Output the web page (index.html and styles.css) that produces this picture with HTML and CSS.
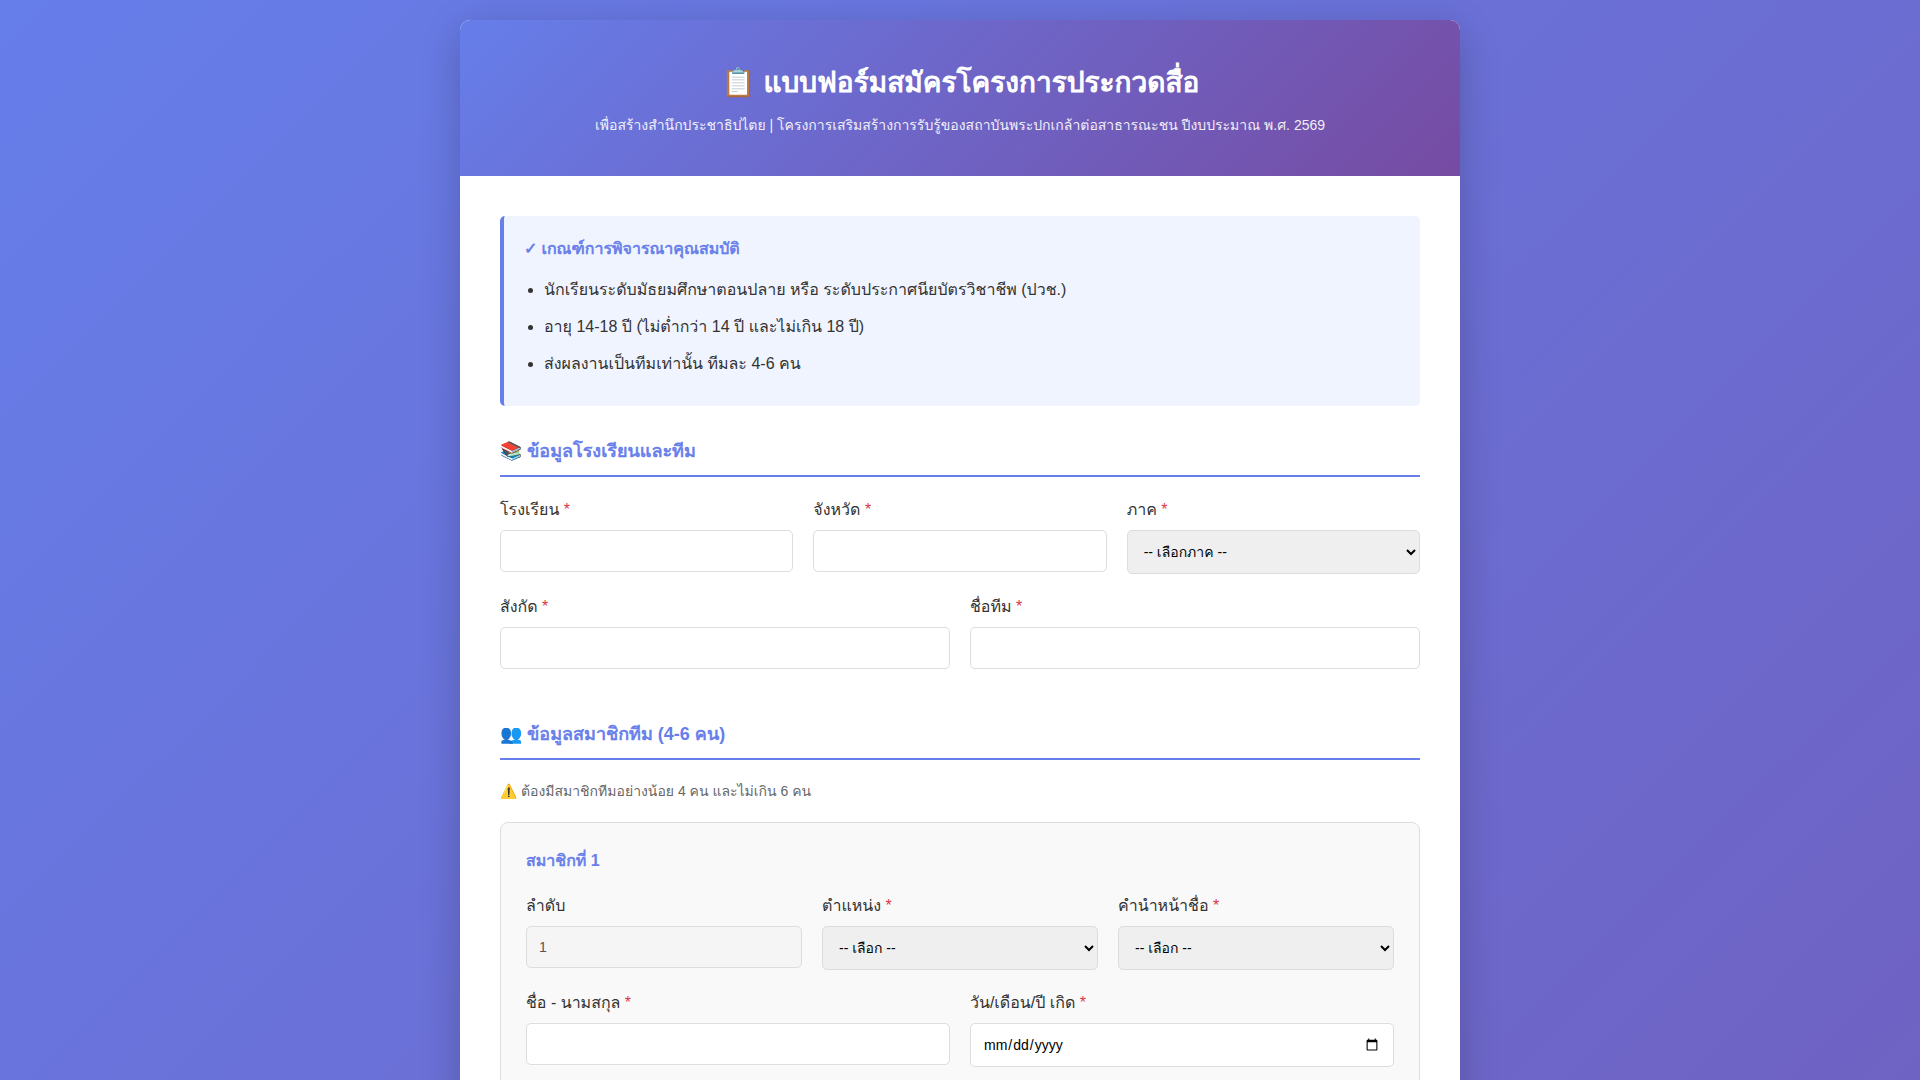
FILE: index.html
```html
<!DOCTYPE html>
<html lang="th">
<head>
<meta charset="UTF-8">
<meta name="viewport" content="width=device-width, initial-scale=1">
<title>แบบฟอร์มสมัครโครงการประกวดสื่อ</title>
<link rel="stylesheet" href="styles.css">
</head>
<body>
<main class="container">
  <header class="header">
    <h1>📋 <b>แบบฟอร์มสมัครโครงการประกวดสื่อ</b></h1>
    <p>เพื่อสร้างสำนึกประชาธิปไตย | โครงการเสริมสร้างการรับรู้ของสถาบันพระปกเกล้าต่อสาธารณะชน ปีงบประมาณ พ.ศ. 2569</p>
  </header>
  <form class="form">
    <section class="criteria">
      <h2>✓ <b>เกณฑ์การพิจารณาคุณสมบัติ</b></h2>
      <ul>
        <li>นักเรียนระดับมัธยมศึกษาตอนปลาย หรือ ระดับประกาศนียบัตรวิชาชีพ (ปวช.)</li>
        <li>อายุ 14-18 ปี (ไม่ต่ำกว่า 14 ปี และไม่เกิน 18 ปี)</li>
        <li>ส่งผลงานเป็นทีมเท่านั้น ทีมละ 4-6 คน</li>
      </ul>
    </section>

    <section class="section">
      <h2 class="section-title">📚 <b>ข้อมูลโรงเรียนและทีม</b></h2>
      <div class="row three">
        <div class="field"><label for="school">โรงเรียน <span class="required">*</span></label><input type="text" id="school" required></div>
        <div class="field"><label for="province">จังหวัด <span class="required">*</span></label><input type="text" id="province" required></div>
        <div class="field"><label for="region">ภาค <span class="required">*</span></label><select id="region" required><option>-- เลือกภาค --</option></select></div>
      </div>
      <div class="row two">
        <div class="field"><label for="affiliation">สังกัด <span class="required">*</span></label><input type="text" id="affiliation" required></div>
        <div class="field"><label for="team">ชื่อทีม <span class="required">*</span></label><input type="text" id="team" required></div>
      </div>
    </section>

    <section class="section">
      <h2 class="section-title">👥 <b>ข้อมูลสมาชิกทีม</b> (4-6 <b>คน</b>)</h2>
      <p class="note">⚠️ ต้องมีสมาชิกทีมอย่างน้อย 4 คน และไม่เกิน 6 คน</p>
      <div class="member">
        <h3><b>สมาชิกที่</b> 1</h3>
        <div class="row three">
          <div class="field"><label for="order">ลำดับ</label><input type="text" id="order" value="1" readonly></div>
          <div class="field"><label for="position">ตำแหน่ง <span class="required">*</span></label><select id="position" required><option>-- เลือก --</option></select></div>
          <div class="field"><label for="prefix">คำนำหน้าชื่อ <span class="required">*</span></label><select id="prefix" required><option>-- เลือก --</option></select></div>
        </div>
        <div class="row two">
          <div class="field"><label for="fullname">ชื่อ - นามสกุล <span class="required">*</span></label><input type="text" id="fullname" required></div>
          <div class="field"><label for="birthdate">วัน/เดือน/ปี เกิด <span class="required">*</span></label><input type="date" id="birthdate" required></div>
        </div>
      </div>
    </section>
  </form>
</main>
</body>
</html>
```
FILE: styles.css
```css
* {
  box-sizing: border-box;
  margin: 0;
  padding: 0;
}

body {
  min-height: 100vh;
  padding: 20px;
  font-family: "Liberation Sans", Loma, sans-serif;
  color: #333;
  background: linear-gradient(135deg, #667eea 0%, #764ba2 100%);
  background-size: 100% 3600px;
}

.container {
  max-width: 1000px;
  margin: 0 auto;
  overflow: hidden;
  background: #fff;
  border-radius: 10px;
  box-shadow: 0 10px 40px rgba(0, 0, 0, 0.2);
}

/* Thai headings: Loma's regular face thickened, as its bold face is too light */
b {
  font-weight: 400;
  -webkit-text-stroke: 0.04em currentColor;
}

.header {
  padding: 40px;
  text-align: center;
  color: #fff;
  background: linear-gradient(135deg, #667eea 0%, #764ba2 100%);
}

.header h1 {
  margin-bottom: 10px;
  font-size: 28px;
}

.header p {
  font-size: 14px;
  opacity: 0.9;
}

.form {
  padding: 40px;
}

.criteria {
  margin-bottom: 30px;
  padding: 20px;
  background: #f0f4ff;
  border-left: 4px solid #667eea;
  border-radius: 5px;
}

.criteria h2 {
  margin-bottom: 15px;
  font-size: 16px;
  color: #667eea;
}

.criteria ul {
  margin-left: 20px;
}

.criteria li {
  margin-bottom: 8px;
  line-height: 1.8;
}

.section {
  margin-bottom: 50px;
}

.section-title {
  margin-bottom: 20px;
  padding-bottom: 10px;
  font-size: 18px;
  color: #667eea;
  border-bottom: 2px solid #667eea;
}

.row {
  display: grid;
  gap: 20px;
  margin-bottom: 20px;
  align-items: start;
}

.three {
  grid-template-columns: repeat(3, 1fr);
}

.two {
  grid-template-columns: repeat(2, 1fr);
}

.field {
  display: flex;
  flex-direction: column;
}

.field label {
  margin-bottom: 8px;
}

.required {
  color: #dc3545;
}

input,
select {
  padding: 12px;
  font-family: inherit;
  font-size: 14px;
  border: 1px solid #ddd;
  border-radius: 5px;
}

input[readonly] {
  color: #555;
  background: #f5f5f5;
}

.note {
  margin-bottom: 20px;
  font-size: 14px;
  color: #666;
}

.member {
  padding: 25px;
  background: #f9f9f9;
  border: 1px solid #ddd;
  border-radius: 8px;
}

.member h3 {
  margin-bottom: 20px;
  font-size: 16px;
  color: #667eea;
}
```
